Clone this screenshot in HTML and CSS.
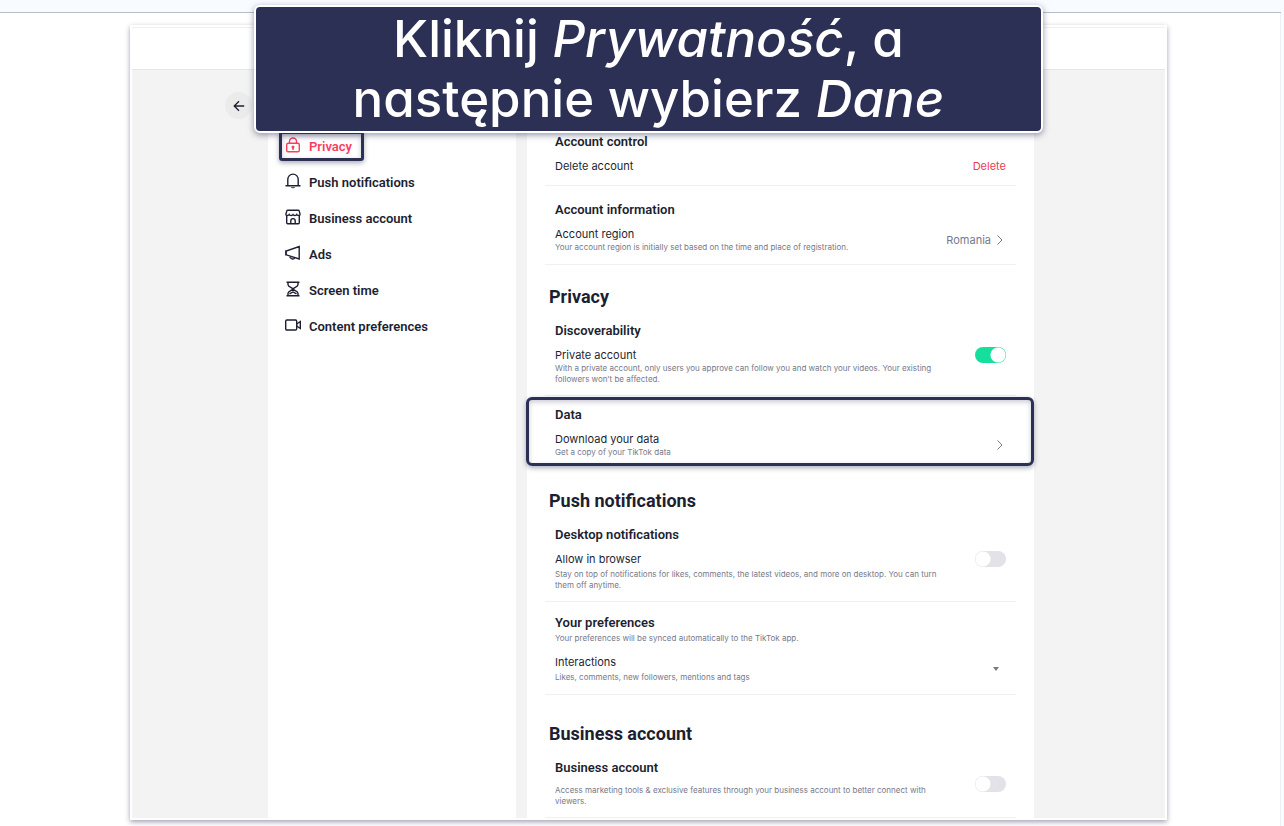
FILE: index.html
```html
<!DOCTYPE html>
<html lang="pl">

<head>
  <meta charset="UTF-8" />
  <meta name="viewport" content="width=device-width, initial-scale=1.0" />
  <title>Privacy</title>
  <link rel="stylesheet" href="styles.css">
</head>

<body>
  <div class="slide">
    <div class="frame">
      <header class="topbar"></header>
      <div class="layout">
        <div class="back-col">
          <button class="back" type="button" aria-label="Back">
            <svg width="12" height="12" viewBox="0 0 12 12"><path d="M6 1.2 1.2 6 6 10.8M1.2 6H11.2" /></svg>
          </button>
        </div>
        <nav class="sidebar">
          <a href="#privacy" class="nav-link active">
            <svg viewBox="0 0 16 16"><rect x="1.700" y="6.300" width="12.600" height="8.500" rx="1.4" /><path d="M4.500 6.300V4.500a3.500 3.500 0 0 1 7 0v1.800M8 10v3" /><circle cx="8" cy="10" r=".8" /></svg>
            Privacy
          </a>
          <a href="#push" class="nav-link">
            <svg viewBox="0 0 16 16"><path d="M.5 12.700h15M2.800 12.700V6.300a5.200 5.200 0 0 1 10.400 0v6.400" /><path d="M5.700 14.200h4.600a2.500 1.800 0 0 1-4.600 0z" class="solid" /></svg>
            Push notifications
          </a>
          <a href="#business" class="nav-link">
            <svg viewBox="0 0 16 16"><path d="M1.700 7v6.800a1 1 0 0 0 1 1h10.600a1 1 0 0 0 1-1V7M2.800 1.200h10.400a1 1 0 0 1 1 .7l.9 3.400q0 1.200-1.400 1.200t-1.900-1q-.6 1-1.900 1T8 5.500q-.6 1-1.900 1t-1.900-1q-.5 1-1.900 1T.9 5.300l.9-3.400a1 1 0 0 1 1-.7zM5.800 14.800v-3a2.200 2.200 0 0 1 4.400 0v3" /></svg>
            Business account
          </a>
          <a href="#ads" class="nav-link">
            <svg viewBox="0 0 16 16"><path d="M14.200 1.600v12.400L1.200 9.800V6zM.8 5.200v5.400M4.500 10.800c.3 3.400 4.300 4 5.300 1.900" /></svg>
            Ads
          </a>
          <a href="#screen" class="nav-link">
            <svg viewBox="0 0 16 16"><path d="M1.500 1.200h13M1.500 14.800h13M3 1.200v2.500c0 2 5 3.300 5 4.300s-5 2.300-5 4.300v2.500M13 1.200v2.500c0 2-5 3.300-5 4.300s5 2.300 5 4.300v2.500M4.500 12.800 8 11l3.500 1.800" /></svg>
            Screen time
          </a>
          <a href="#content" class="nav-link">
            <svg viewBox="0 0 16 16"><rect x=".7" y="3" width="11" height="10" rx="1.200" /><path d="m11.700 7 3.600-2.500v7L11.700 9" /></svg>
            Content preferences
          </a>
        </nav>

        <main class="settings">
          <section class="group">
            <h3>Account control</h3>
            <div class="row">
              <div class="text">
                <p class="label">Delete account</p>
              </div>
              <button class="delete" type="button">Delete</button>
            </div>
          </section>
          <section class="group">
            <h3>Account information</h3>
            <div class="row">
              <div class="text">
                <p class="label">Account region</p>
                <p class="desc">Your account region is initially set based on the time and place of registration.</p>
              </div>
              <button class="more" type="button">Romania
                <svg class="chevron" viewBox="0 0 12 12"><path d="m3.500 1.500 4.500 4.500-4.500 4.500" /></svg>
              </button>
            </div>
          </section>

          <h2 id="privacy">Privacy</h2>
          <section class="group">
            <h3>Discoverability</h3>
            <div class="row">
              <div class="text">
                <label class="label" for="private">Private account</label>
                <p class="desc">With a private account, only users you approve can follow you and watch your videos. Your existing followers won’t be affected.</p>
              </div>
              <input class="toggle" type="checkbox" id="private" checked>
            </div>
          </section>
          <section class="group data">
            <h3>Data</h3>
            <div class="row">
              <div class="text">
                <p class="label">Download your data</p>
                <p class="desc">Get a copy of your TikTok data</p>
              </div>
              <button class="more" type="button" aria-label="Download your data">
                <svg class="chevron" viewBox="0 0 12 12"><path d="m3.500 1.500 4.500 4.500-4.500 4.500" /></svg>
              </button>
            </div>
          </section>

          <h2 id="push">Push notifications</h2>
          <section class="group">
            <h3>Desktop notifications</h3>
            <div class="row spaced">
              <div class="text">
                <label class="label" for="browser">Allow in browser</label>
                <p class="desc">Stay on top of notifications for likes, comments, the latest videos, and more on desktop. You can turn them off anytime.</p>
              </div>
              <input class="toggle" type="checkbox" id="browser">
            </div>
          </section>
          <section class="group prefs">
            <h3>Your preferences</h3>
            <p class="desc">Your preferences will be synced automatically to the TikTok app.</p>
            <div class="row spaced">
              <div class="text">
                <p class="label">Interactions</p>
                <p class="desc">Likes, comments, new followers, mentions and tags</p>
              </div>
              <button class="expand" type="button" aria-label="Interactions">
                <svg width="6" height="4" viewBox="0 0 6 4"><path d="M0 0h6L3 4z" /></svg>
              </button>
            </div>
          </section>

          <h2 id="business" class="far">Business account</h2>
          <section class="group">
            <h3>Business account</h3>
            <div class="row tight">
              <div class="text">
                <label class="desc" for="tools">Access marketing tools &amp; exclusive features through your business account to better connect with viewers.</label>
              </div>
              <input class="toggle" type="checkbox" id="tools">
            </div>
          </section>
        </main>
      </div>
    </div>
    <h1 class="banner">Kliknij <em>Prywatność</em>, a<br>następnie wybierz <em>Dane</em></h1>
  </div>
</body>

</html>
```
FILE: styles.css
```css
* {
  padding: 0;
  margin: 0;
  box-sizing: border-box;
}

body {
  font-family: Roboto, "Liberation Sans", sans-serif;
  color: #1d1f31;
  background: #f8fbff;
}

button {
  border: 0;
  background: none;
  font: inherit;
  cursor: pointer;
}

svg {
  fill: none;
  stroke: currentColor;
}

.slide {
  position: relative;
  display: flex;
  height: 100vh;
  padding: 13px 114px 6px 130px;
  border-top: 12px solid #f8fbff;
  border-right: 3px solid #f8fbff;
  background: #fff;
  box-shadow: inset 0 1px #b8bcc8, inset -1px 0 #eeeff3;
}

/* screenshot card */
.frame {
  flex: 1;
  display: flex;
  flex-direction: column;
  overflow: hidden;
  border: 2px solid #fff;
  background: #f3f3f3;
  box-shadow: 0 2px 5px rgba(45, 48, 85, 0.45);
}

.topbar {
  flex: none;
  height: 43px;
  background: #fff;
  border-top: 1px solid #f0f0f2;
  border-bottom: 1px solid #e6e6e8;
}

.layout {
  flex: 1;
  display: flex;
  min-height: 0;
  padding-right: 131px;
}

.back-col {
  width: 136px;
  padding: 22px 0 0 93px;
}

.back {
  display: flex;
  align-items: center;
  justify-content: center;
  width: 27px;
  height: 27px;
  border-radius: 50%;
  background: #ebebec;
  color: #1d1f31;
}

.back svg {
  stroke-width: 1.3;
}

.sidebar {
  width: 248px;
  margin-right: 11px;
  padding: 58px 0 0 11px;
  background: #fff;
}

.nav-link {
  position: relative;
  display: flex;
  align-items: center;
  gap: 8px;
  width: fit-content;
  height: 36px;
  padding: 0 12px 0 6px;
  color: #1d1f31;
  font-size: 13px;
  font-weight: 600;
  text-decoration: none;
}

.nav-link svg {
  width: 16px;
  height: 16px;
  margin-bottom: 3px;
  stroke-width: 1.4;
}

.nav-link .solid {
  fill: currentColor;
  stroke: none;
}

.nav-link.active {
  color: #fa3e5f;
}

/* highlight boxes */
.nav-link.active::after,
.data::after {
  content: "";
  position: absolute;
  inset: 3px 0;
  border: 3px solid #2d3055;
  border-radius: 3px;
  box-shadow: 0 2px 5px rgba(45, 48, 85, 0.4), inset 0 2px 5px rgba(45, 48, 85, 0.25);
  pointer-events: none;
}

.settings {
  flex: 1;
  height: fit-content;
  min-height: 100%;
  padding: 48px 18px 0;
  background: #fff;
}

.settings h2 {
  margin: 23px 0 0 4px;
  font-size: 18px;
  line-height: 18px;
}

.settings h2.far {
  margin-top: 30px;
}

.group {
  position: relative;
  padding: 16px 10px 11px;
  border-bottom: 1px solid #f0f0f2;
}

h2 + .group {
  padding-top: 17px;
  padding-bottom: 10px;
}

.group.data {
  padding-top: 11px;
  padding-bottom: 10px;
  border-color: transparent;
}

.data::after {
  inset: 1px -18px 2px -19px;
  border-radius: 6px;
}

.group.prefs {
  padding-top: 13px;
}

.group h3 {
  font-size: 13px;
  font-weight: 600;
  line-height: 16px;
}

.row {
  display: flex;
  align-items: center;
  justify-content: space-between;
  margin-top: 8px;
}

.row.tight {
  margin-top: 0;
}

.tight .desc {
  margin-top: 9px;
}

.prefs .row {
  margin-top: 10px;
}

.text {
  max-width: 392px;
}

.label,
.delete,
.more {
  font-family: Inter, Roboto, sans-serif;
  font-size: 11px;
  line-height: 16px;
}

.label {
  display: block;
}

.desc {
  display: block;
  color: #77798a;
  font-family: Inter, Roboto, sans-serif;
  font-size: 8px;
  line-height: 11px;
}

.spaced .desc,
.prefs > .desc {
  margin-top: 2px;
}

.delete {
  color: #ee3c58;
}

.more {
  display: flex;
  align-items: center;
  gap: 3px;
  color: #77798a;
}

.chevron {
  width: 12px;
  height: 12px;
}

.expand {
  display: flex;
  padding: 6px 7px;
}

.expand svg {
  fill: #77798a;
  stroke: none;
}

.toggle {
  appearance: none;
  flex: none;
  align-self: flex-start;
  width: 31px;
  height: 16px;
  border-radius: 8px;
  background: radial-gradient(circle at 8px 8px, #fff 7px, transparent 8px) #e2e2e8;
}

.toggle:checked {
  background: radial-gradient(circle at 23px 8px, #fff 7px, transparent 8px) #14df9c;
}

.banner {
  position: absolute;
  top: -7px;
  left: 254px;
  right: 238px;
  padding: 2px 0;
  border: 2px solid #fff;
  border-radius: 6px;
  background: #2d3055;
  color: #fff;
  box-shadow: 0 2px 6px rgba(45, 48, 85, 0.5);
  font-family: Inter, "Open Sans", sans-serif;
  font-feature-settings: "cv11";
  font-size: 51px;
  font-weight: 500;
  line-height: 60px;
  text-align: center;
}
```
